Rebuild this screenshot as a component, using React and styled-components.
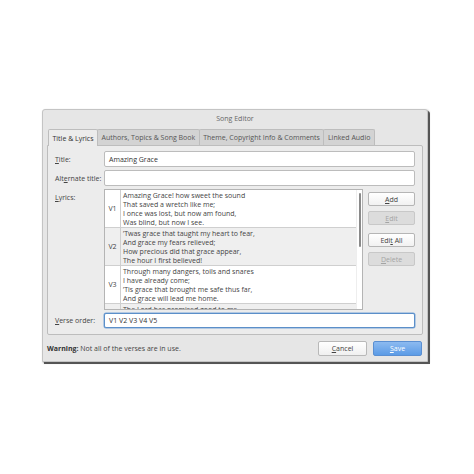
import React from 'react';
import styled, { createGlobalStyle } from 'styled-components';

const GlobalStyle = createGlobalStyle`
  html, body {
    margin: 0;
    padding: 0;
    background: #ffffff;
  }
  body {
    font-family: "Open Sans", "Noto Sans", sans-serif;
    color: #333;
  }
`;

const verses = [
  {
    tag: 'V1',
    lines: [
      'Amazing Grace! how sweet the sound',
      'That saved a wretch like me;',
      'I once was lost, but now am found,',
      'Was blind, but now I see.',
    ],
  },
  {
    tag: 'V2',
    lines: [
      '’Twas grace that taught my heart to fear,',
      'And grace my fears relieved;',
      'How precious did that grace appear,',
      'The hour I first believed!',
    ],
  },
  {
    tag: 'V3',
    lines: [
      'Through many dangers, toils and snares',
      'I have already come;',
      '’Tis grace that brought me safe thus far,',
      'And grace will lead me home.',
    ],
  },
  {
    tag: 'V4',
    lines: ['The Lord has promised good to me,', 'His word my hope secures;'],
  },
];

const tabs = [
  'Title & Lyrics',
  'Authors, Topics & Song Book',
  'Theme, Copyright Info & Comments',
  'Linked Audio',
];

const App = () => {
  return (
    <>
      <GlobalStyle />
      <Page>
        <Dialog>
          <TitleBar>Song Editor</TitleBar>
          <TabBar>
            {tabs.map((t, i) => (
              <Tab key={t} $active={i === 0}>
                {t}
              </Tab>
            ))}
          </TabBar>
          <Panel>
            <Label>
              <u>T</u>itle:
            </Label>
            <Input>Amazing Grace</Input>
            <Label>
              Alt<u>e</u>rnate title:
            </Label>
            <Input />
            <Label $top>
              <u>L</u>yrics:
            </Label>
            <LyricsRow>
              <VerseList>
                <VerseScroll>
                  {verses.map((v, i) => (
                    <VerseRow key={v.tag} $alt={i % 2 === 1}>
                      <VerseTag>{v.tag}</VerseTag>
                      <VerseText>
                        {v.lines.map((l) => (
                          <div key={l}>{l}</div>
                        ))}
                      </VerseText>
                    </VerseRow>
                  ))}
                </VerseScroll>
                <ScrollTrack>
                  <ScrollThumb />
                </ScrollTrack>
              </VerseList>
              <ButtonColumn>
                <SideButton>
                  <span>
                    <u>A</u>dd
                  </span>
                </SideButton>
                <SideButton disabled>
                  <span>
                    <u>E</u>dit
                  </span>
                </SideButton>
                <SideButton $gap>
                  <span>
                    Edi<u>t</u> All
                  </span>
                </SideButton>
                <SideButton disabled>
                  <span>
                    <u>D</u>elete
                  </span>
                </SideButton>
              </ButtonColumn>
            </LyricsRow>
            <Label>
              <u>V</u>erse order:
            </Label>
            <Input $focus>V1 V2 V3 V4 V5</Input>
          </Panel>
          <Footer>
            <Warning>
              <b>Warning:</b> Not all of the verses are in use.
            </Warning>
            <DialogButton>
              <span>
                <u>C</u>ancel
              </span>
            </DialogButton>
            <DialogButton $primary>
              <span>
                <u>S</u>ave
              </span>
            </DialogButton>
          </Footer>
        </Dialog>
      </Page>
    </>
  );
};

const Page = styled.div`
  padding: 109px 0 0 42px;
  width: 474px;
  height: 474px;
  box-sizing: border-box;
`;

const Dialog = styled.div`
  width: 386px;
  height: 253px;
  box-sizing: border-box;
  background: #e6e6e6;
  border: 1px solid #c4c4c4;
  border-radius: 3px 3px 0 0;
  box-shadow: 2px 2px 0 #555, 1px 1px 2px rgba(0, 0, 0, 0.4);
  display: flex;
  flex-direction: column;
  font-size: 7px;
`;

const TitleBar = styled.div`
  height: 18px;
  display: flex;
  align-items: center;
  justify-content: center;
  color: #666;
  padding-bottom: 2px;
  box-sizing: border-box;
`;

const TabBar = styled.div`
  display: flex;
  padding: 1px 0 0 5px;
  height: 17px;
  box-sizing: border-box;
`;

const Tab = styled.div`
  padding: 0 3.5px;
  display: flex;
  align-items: center;
  border: 1px solid #bdbdbd;
  border-bottom: none;
  margin-right: -1px;
  background: ${(p) => (p.$active ? '#ececec' : '#d3d3d3')};
  color: ${(p) => (p.$active ? '#333' : '#555')};
  border-radius: 2px 2px 0 0;
  position: relative;
  z-index: ${(p) => (p.$active ? 2 : 1)};
  margin-bottom: ${(p) => (p.$active ? '-1px' : '0')};
`;

const Panel = styled.div`
  margin: 0 4px;
  height: 190px;
  box-sizing: border-box;
  background: #ececec;
  border: 1px solid #bdbdbd;
  border-radius: 0 2px 2px 2px;
  display: grid;
  grid-template-columns: 49px 1fr;
  grid-template-rows: 16px 16px 121px 15px;
  row-gap: 3px;
  padding: 5px 7px 0 7px;
  align-items: center;
`;

const Label = styled.div`
  color: #444;
  white-space: nowrap;
  align-self: ${(p) => (p.$top ? 'start' : 'center')};
  padding-top: ${(p) => (p.$top ? '4px' : '0')};
`;

const Input = styled.div`
  height: 100%;
  box-sizing: border-box;
  background: #fff;
  border: 1px solid ${(p) => (p.$focus ? '#5b8fc9' : '#bcbcbc')};
  box-shadow: ${(p) => (p.$focus ? '0 0 0 0.5px #7aa6d8' : 'none')};
  border-radius: 2px;
  display: flex;
  align-items: center;
  padding: 0 4px;
  color: #333;
`;

const LyricsRow = styled.div`
  display: flex;
  height: 100%;
  gap: 5px;
  align-self: stretch;
`;

const VerseList = styled.div`
  width: 259px;
  height: 121px;
  box-sizing: border-box;
  border: 1px solid #b4b4b4;
  background: #fff;
  display: flex;
  overflow: hidden;
`;

const VerseScroll = styled.div`
  flex: 1;
  overflow: hidden;
`;

const VerseRow = styled.div`
  display: flex;
  height: 37px;
  border-bottom: 1px solid #cfcfcf;
  background: ${(p) => (p.$alt ? '#efefef' : '#fff')};
`;

const VerseTag = styled.div`
  width: 15px;
  flex-shrink: 0;
  display: flex;
  align-items: center;
  justify-content: center;
  border-right: 1px solid #cfcfcf;
  color: #444;
`;

const VerseText = styled.div`
  padding: 1px 0 0 2px;
  line-height: 9px;
  white-space: nowrap;
  color: #444;
`;

const ScrollTrack = styled.div`
  width: 6px;
  background: #fff;
  padding: 3px 1px;
  box-sizing: border-box;
  border-left: 1px solid #eee;
`;

const ScrollThumb = styled.div`
  width: 2px;
  margin: 0 auto;
  height: 54px;
  background: #8a8a8a;
  border-radius: 1px;
`;

const ButtonColumn = styled.div`
  display: flex;
  flex-direction: column;
  gap: 5px;
  padding-top: 3px;
  flex: 1;
`;

const SideButton = styled.div`
  height: 14px;
  box-sizing: border-box;
  border: 1px solid ${(p) => (p.disabled ? '#c8c8c8' : '#b5b5b5')};
  border-radius: 2px;
  background: ${(p) =>
    p.disabled ? '#dcdcdc' : 'linear-gradient(#ffffff, #f1f1f1)'};
  color: ${(p) => (p.disabled ? '#a4a4a4' : '#444')};
  display: flex;
  align-items: center;
  justify-content: center;
  margin-top: ${(p) => (p.$gap ? '3px' : '0')};
`;

const Footer = styled.div`
  flex: 1;
  display: flex;
  align-items: center;
  padding: 0 5px 0 4px;
  gap: 6px;
`;

const Warning = styled.div`
  flex: 1;
  color: #444;
  b {
    color: #333;
  }
`;

const DialogButton = styled.div`
  width: 49px;
  height: 15px;
  box-sizing: border-box;
  border-radius: 2px;
  border: 1px solid ${(p) => (p.$primary ? '#5a8fd2' : '#b8b8b8')};
  background: ${(p) =>
    p.$primary
      ? 'linear-gradient(#8cbaf0, #5b9be6)'
      : 'linear-gradient(#ffffff, #f0f0f0)'};
  color: ${(p) => (p.$primary ? '#fff' : '#444')};
  display: flex;
  align-items: center;
  justify-content: center;
`;

export default App;
